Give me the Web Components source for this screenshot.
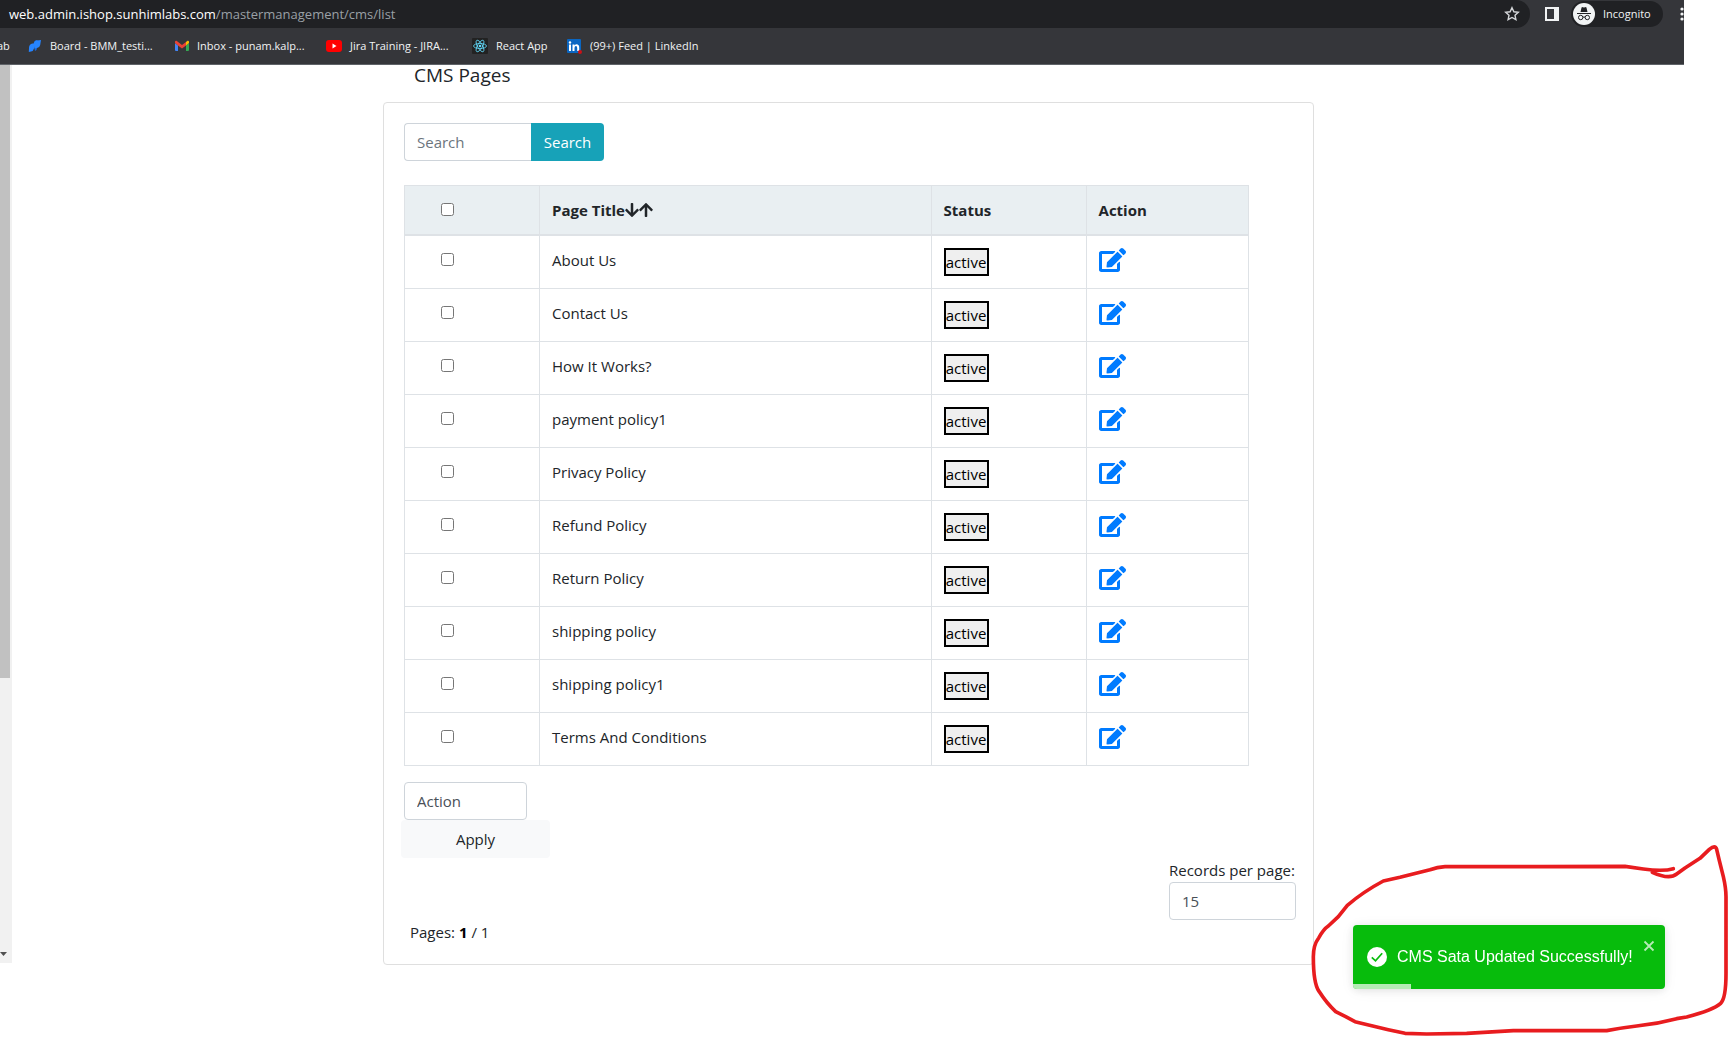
<!DOCTYPE html>
<html lang="en">
<head>
    <meta charset="utf-8">
    <title>CMS Pages</title>
    <style>
        body {
            margin: 0;
            background: #fff;
            color: #212529;
            font: 15px/24px "Open Sans", "Noto Sans", sans-serif;
        }
    </style>
</head>
<body>
<cms-app></cms-app>

<script>
class BookmarkLink extends HTMLElement {
    connectedCallback() {
        this.attachShadow({mode: 'open'}).innerHTML = `
            <style>
              :host {
                display: block;
                flex: none;
                box-sizing: border-box;
              }
              a {
                display: flex;
                align-items: center;
                gap: 8px;
                color: #f1f3f4;
                text-decoration: none;
                white-space: nowrap;
              }
            </style>
            <a href="#"><slot name="icon"></slot><span><slot></slot></span></a>
        `;
    }
}

class BrowserBar extends HTMLElement {
    connectedCallback() {
        this.attachShadow({mode: 'open'}).innerHTML = `
            <style>
              :host {
                display: block;
                overflow: hidden;
                margin-right: 44px;
                background: #35363a;
                border-bottom: 1px solid #5f6368;
                font-size: 11px;
                line-height: 16px;
                color: #f1f3f4;
              }
              .top {
                display: flex;
                align-items: center;
                height: 28px;
              }
              .address {
                display: flex;
                flex: 1;
                align-items: center;
                justify-content: space-between;
                height: 28px;
                padding: 0 10px 0 9px;
                box-sizing: border-box;
                background: #202124;
                border-radius: 0 14px 14px 0;
                font-size: 13px;
                color: #9aa0a6;
              }
              .address b {
                color: #fff;
                font-weight: 400;
              }
              .panel {
                margin: 0 12px 0 15px;
              }
              .incognito {
                display: flex;
                align-items: center;
                gap: 8px;
                width: 92px;
                height: 26px;
                padding: 0 2px;
                box-sizing: border-box;
                background: #202124;
                border-radius: 13px;
              }
              .dots {
                margin: 0 -2px 0 17px;
              }
              .address {
                margin-right: 0;
              }
              .top {
                padding-right: 2px;
              }
              svg {
                display: block;
                flex: none;
              }
              nav {
                display: flex;
                align-items: center;
                height: 36px;
                margin-left: -3px;
              }
              .cut { width: 31px; }
              .board { width: 147px; }
              .mail { width: 151px; }
              .video { width: 146px; }
              .react { width: 95px; }
            </style>
            <div class="top">
                <div class="address">
                    <span><b>web.admin.ishop.sunhimlabs.com</b>/mastermanagement/cms/list</span>
                    <svg width="16" height="16" viewBox="0 0 16 16" fill="none" stroke="#d5d7da" stroke-width="1.4"><path d="M8 1.7l1.9 4.1 4.4.5-3.3 3 .9 4.4L8 11.5l-3.9 2.2.9-4.4-3.3-3 4.4-.5z"/></svg>
                </div>
                <svg class="panel" width="14" height="14" viewBox="0 0 14 14"><path fill="#f1f3f4" fill-rule="evenodd" d="M0 0h14v14H0zM2 2v10h7V2z"/></svg>
                <div class="incognito">
                    <svg width="22" height="22" viewBox="0 0 22 22">
                        <circle cx="11" cy="11" r="11" fill="#f1f3f4"/>
                        <path fill="#202124" d="M7.5 9l1-4.300q.3-.8 1.200-.5l1.300.4 1.300-.4q.9-.3 1.200.5l1 4.300zM4 10h14v1H4z"/>
                        <g fill="none" stroke="#202124"><circle cx="7.700" cy="14.500" r="2.200"/><circle cx="14.300" cy="14.500" r="2.200"/><path d="M9.900 14.300q1.100-.8 2.200 0"/></g>
                    </svg>
                    <span>Incognito</span>
                </div>
                <svg class="dots" width="4" height="14" viewBox="0 0 4 14" fill="#f1f3f4"><circle cx="2" cy="2" r="1.600"/><circle cx="2" cy="7" r="1.600"/><circle cx="2" cy="12" r="1.600"/></svg>
            </div>
            <nav>
                <bookmark-link class="cut">ab</bookmark-link>
                <bookmark-link class="board">
                    <svg slot="icon" width="14" height="14" viewBox="0 0 14 14"><path fill="#1868db" d="M5.500 5L7 12q2-.5 2-3l.5-8Q6 1 5.500 5z"/><path fill="#2684ff" d="M6 4.500Q6 2 9 1.600L13 1l-.8 5Q11.800 8.500 9 9l-2.500.5zM1 9q0-4 3.500-4.500l2-.3L6 9.500Q5.500 12 3 12.500L.8 13z"/></svg>
                    Board - BMM_testi...
                </bookmark-link>
                <bookmark-link class="mail">
                    <svg slot="icon" width="14" height="12" viewBox="0 0 14 12"><path fill="#4285f4" d="M0 3l3 2.500V11H1q-1 0-1-1z"/><path fill="#34a853" d="M14 3l-3 2.500V11h2q1 0 1-1z"/><path fill="#ea4335" d="M0 3V2Q0 .5 1.500.8L7 5l4-3v3.500L7 8.500 3 5.500z"/><path fill="#fbbc04" d="M11 5.500V2l1.500-1.200Q14 .5 14 2v1z"/></svg>
                    Inbox - punam.kalp...
                </bookmark-link>
                <bookmark-link class="video">
                    <svg slot="icon" width="16" height="12" viewBox="0 0 16 12"><rect width="16" height="12" rx="3" fill="#f00"/><path fill="#fff" d="M6.500 3.500L10.500 6l-4 2.500z"/></svg>
                    Jira Training - JIRA...
                </bookmark-link>
                <bookmark-link class="react">
                    <svg slot="icon" width="16" height="16" viewBox="0 0 16 16"><rect width="16" height="16" rx="1" fill="#222"/><g fill="none" stroke="#61dafb" stroke-width=".8"><ellipse cx="8" cy="8" rx="6.500" ry="2.500"/><ellipse cx="8" cy="8" rx="6.500" ry="2.500" transform="rotate(60 8 8)"/><ellipse cx="8" cy="8" rx="6.500" ry="2.500" transform="rotate(120 8 8)"/></g><circle cx="8" cy="8" r="1.300" fill="#61dafb"/></svg>
                    React App
                </bookmark-link>
                <bookmark-link>
                    <svg slot="icon" width="15" height="15" viewBox="0 0 15 15"><rect width="14" height="14" rx="1" fill="#0a66c2"/><path fill="#fff" d="M2 5.500h2V12H2zM5.500 5.500h2v1q2-2.300 4.300 0 .4.600.4 2V12h-2V9q0-2-1.300-2T7.500 9v3h-2z"/><circle cx="3" cy="3.500" r="1.200" fill="#fff"/><circle cx="13" cy="13" r="2" fill="#cc1016"/></svg>
                    (99+) Feed | LinkedIn
                </bookmark-link>
            </nav>
        `;
    }
}

class SideScroll extends HTMLElement {
    connectedCallback() {
        this.attachShadow({mode: 'open'}).innerHTML = `
            <style>
              :host {
                display: flex;
                flex-direction: column;
                justify-content: space-between;
                background: #f1f1f1;
              }
              .thumb {
                width: 10px;
                height: 68.3%;
                background: #c1c1c1;
              }
              svg {
                display: block;
                margin-bottom: 7px;
              }
            </style>
            <div class="thumb"></div>
            <svg width="7" height="4" viewBox="0 0 7 4"><path fill="#505050" d="M0 0h7L3.500 4z"/></svg>
        `;
    }
}

class SearchBox extends HTMLElement {
    connectedCallback() {
        this.attachShadow({mode: 'open'}).innerHTML = `
            <style>
              :host {
                display: flex;
              }
              input, button {
                height: 38px;
                box-sizing: border-box;
                padding: 0 12px;
                font: inherit;
              }
              input {
                width: 127px;
                border: 1px solid #ced4da;
                border-right: 0;
                border-radius: 4px 0 0 4px;
              }
              input::placeholder {
                color: #6c757d;
              }
              button {
                width: 73px;
                padding: 0;
                border: 0;
                border-radius: 0 4px 4px 0;
                background: #17a2b8;
                color: #fff;
              }
            </style>
            <input type="text" placeholder="Search" aria-label="Search pages">
            <button type="button">Search</button>
        `;
    }
}

class PagesTable extends HTMLElement {
    connectedCallback() {
        this.pages = ['About Us', 'Contact Us', 'How It Works?', 'payment policy1', 'Privacy Policy',
            'Refund Policy', 'Return Policy', 'shipping policy', 'shipping policy1', 'Terms And Conditions'];
        this.attachShadow({mode: 'open'});
        this.render();
    }

    renderRow(title) {
        return `
            <tr>
                <td class="check"><input type="checkbox" aria-label="Select ${title}"></td>
                <td>${title}</td>
                <td><button type="button">active</button></td>
                <td><a href="#" aria-label="Edit ${title}"><svg width="27" height="24" viewBox="0 0 576 512" fill="#007bff"><path d="M402.600 83.200l90.200 90.200c3.800 3.800 3.800 10 0 13.800L274.400 405.600l-92.800 10.300c-12.400 1.400-22.900-9.100-21.500-21.500l10.300-92.800L388.800 83.200c3.800-3.800 10-3.800 13.800 0zm162-22.900l-48.800-48.800c-15.200-15.200-39.900-15.200-55.200 0l-35.400 35.400c-3.800 3.800-3.800 10 0 13.800l90.200 90.200c3.800 3.800 10 3.800 13.800 0l35.400-35.400c15.200-15.300 15.200-40 0-55.200zM384 346.200V448H64V128h229.800c3.200 0 6.200-1.300 8.500-3.500l40-40c7.600-7.600 2.200-20.500-8.500-20.500H48C21.500 64 0 85.500 0 112v352c0 26.500 21.500 48 48 48h352c26.500 0 48-21.500 48-48V306.200c0-10.700-12.900-16-20.500-8.500l-40 40c-2.200 2.300-3.500 5.300-3.500 8.500z"/></svg></a></td>
            </tr>
        `;
    }

    render() {
        const arrow = 'M413.100 222.500l22.200 22.200c9.400 9.400 9.400 24.600 0 33.900L241 473c-9.400 9.400-24.600 9.400-33.900 0L12.700 278.600c-9.400-9.400-9.400-24.600 0-33.900l22.200-22.200c9.500-9.500 25-9.300 34.300.4L184 343.400V56c0-13.300 10.700-24 24-24h32c13.300 0 24 10.700 24 24v287.400l114.800-120.500c9.300-9.800 24.800-10 34.300-.4z';
        this.shadowRoot.innerHTML = `
            <style>
              :host {
                display: block;
              }
              table {
                width: 95%;
                table-layout: fixed;
                border-collapse: collapse;
              }
              th, td {
                box-sizing: border-box;
                padding: 12px;
                border: 1px solid #dee2e6;
                text-align: left;
                vertical-align: top;
              }
              th {
                height: 49px;
                padding-bottom: 11px;
                border-bottom-width: 2px;
                background: #e9eff2;
                font-weight: 700;
              }
              td {
                height: 53px;
              }
              .check {
                width: 135px;
                padding: 17px 36px 16px;
                line-height: 0;
              }
              .status { width: 155px; }
              .action { width: 162px; }
              input {
                width: 13px;
                height: 13px;
                margin: 0;
              }
              button {
                display: block;
                width: 45px;
                height: 28px;
                padding: 0;
                border: 2px solid #000;
                background: #efefef;
                color: #000;
                font: inherit;
              }
              a, a svg {
                display: block;
              }
              .arrow {
                display: inline-block;
                vertical-align: -2px;
              }
            </style>
            <table>
                <thead>
                    <tr>
                        <th class="check"><input type="checkbox" aria-label="Select all"></th>
                        <th>Page Title<svg class="arrow" width="14" height="16" viewBox="0 0 448 512" fill="#212529"><path d="${arrow}"/></svg><svg class="arrow" width="14" height="16" viewBox="0 0 448 512" fill="#212529"><path transform="rotate(180 224 256)" d="${arrow}"/></svg></th>
                        <th class="status">Status</th>
                        <th class="action">Action</th>
                    </tr>
                </thead>
                <tbody>${this.pages.map((title) => this.renderRow(title)).join('')}</tbody>
            </table>
        `;
    }
}

class TableFooter extends HTMLElement {
    connectedCallback() {
        this.attachShadow({mode: 'open'}).innerHTML = `
            <style>
              :host {
                display: block;
              }
              select {
                display: block;
                width: 127px;
                height: 38px;
                padding: 0 12px;
                box-sizing: border-box;
                appearance: none;
                border: 1px solid #ced4da;
                border-radius: 4px;
                background: #fff;
                color: #495057;
                font: inherit;
              }
              .bulk {
                width: 123px;
              }
              button {
                display: block;
                width: 149px;
                height: 38px;
                margin-left: -3px;
                padding: 0;
                border: 0;
                border-radius: 4px;
                background: #f8f9fa;
                color: #212529;
                font: inherit;
              }
              .records {
                width: 127px;
                margin: 0 -3px 0 auto;
                white-space: nowrap;
              }
              .pages {
                padding-left: 6px;
              }
              .pages b {
                color: #000;
              }
            </style>
            <select class="bulk" aria-label="Bulk action"><option>Action</option></select>
            <button type="button">Apply</button>
            <div class="records">
                <label for="records">Records per page:</label>
                <select id="records"><option>15</option></select>
            </div>
            <div class="pages">Pages: <b>1</b> / 1</div>
        `;
    }
}

class CmsCard extends HTMLElement {
    connectedCallback() {
        this.attachShadow({mode: 'open'}).innerHTML = `
            <style>
              :host {
                display: block;
              }
              h1 {
                margin: 0 0 17px 31px;
                font-size: 19px;
                font-weight: 400;
                line-height: 20px;
              }
              section {
                display: flex;
                flex-direction: column;
                padding: 20px;
                border: 1px solid #dfdfdf;
                border-radius: 4px;
              }
              pages-table {
                margin: 24px 0 16px;
              }
            </style>
            <h1><slot></slot></h1>
            <section>
                <search-box></search-box>
                <pages-table></pages-table>
                <table-footer></table-footer>
            </section>
        `;
    }
}

class ToastMessage extends HTMLElement {
    connectedCallback() {
        this.attachShadow({mode: 'open'}).innerHTML = `
            <style>
              :host {
                display: block;
                overflow: hidden;
                border-radius: 4px;
                background: #07bc0c;
                box-shadow: 0 1px 10px rgba(0, 0, 0, .1), 0 2px 15px rgba(0, 0, 0, .05);
                color: #fff;
                font: 16px/20px "Liberation Sans", sans-serif;
              }
              .body {
                display: flex;
                height: 59px;
                padding: 0 10px 0 14px;
              }
              .icon {
                flex: none;
                margin: 22px 10px 0 0;
              }
              p {
                flex: 1;
                margin: 22px 0 0;
                white-space: nowrap;
              }
              button {
                display: block;
                height: 12px;
                margin-top: 15px;
                padding: 0;
                border: 0;
                background: none;
              }
              button svg {
                display: block;
              }
              .progress {
                width: 58px;
                height: 5px;
                background: rgba(255, 255, 255, .7);
              }
            </style>
            <div class="body">
                <svg class="icon" width="20" height="20" viewBox="0 0 20 20"><circle cx="10" cy="10" r="10" fill="#fff"/><path fill="none" stroke="#07bc0c" stroke-width="1.700" d="M4.800 10.300l3.700 3.500 6.700-7.600"/></svg>
                <p><slot></slot></p>
                <button type="button" aria-label="Close"><svg width="12" height="12" viewBox="0 0 12 12" fill="none" stroke="#b5ebb6" stroke-width="1.800"><path d="M1.500 1.500l9 9M10.500 1.500l-9 9"/></svg></button>
            </div>
            <div class="progress"></div>
        `;
    }
}

class RedMarker extends HTMLElement {
    connectedCallback() {
        this.attachShadow({mode: 'open'}).innerHTML = `
            <style>
              :host, svg {
                display: block;
              }
            </style>
            <svg width="428" height="207" viewBox="0 0 1284 621" fill="none" stroke="#e81c1f" stroke-width="11" stroke-linecap="round" stroke-linejoin="round">
                <path d="M1057 127Q1108 150 1130 132L1155 114L1200 85L1228 58Q1246 43 1250 58L1258 92L1270 140Q1278 175 1278 200V430Q1278 505 1262 520Q1240 540 1160 561L1130 566Q1070 582 1010 588Q960 594 920 602H640L500 610L380 612L315 610L265 599L165 575L137 560L107 545Q80 520 57 484Q40 460 40 380Q40 345 56 324Q70 298 85 288L115 260L142 226Q190 185 250 153L300 142L390 119Q412 111 435 110H720L975 109L1030 117Q1090 125 1120 116"/>
            </svg>
        `;
    }
}

class CmsApp extends HTMLElement {
    connectedCallback() {
        this.attachShadow({mode: 'open'}).innerHTML = `
            <style>
              :host {
                display: block;
                position: relative;
                min-height: 100vh;
              }
              .page {
                display: grid;
                grid-template-columns: 12px 371fr 931fr 414fr;
              }
              side-scroll {
                margin-bottom: 2px;
              }
              cms-card {
                grid-column: 3;
              }
              toast-message {
                position: fixed;
                right: 63px;
                bottom: 48px;
                width: 312px;
              }
              red-marker {
                position: fixed;
                right: 0;
                bottom: 0;
                pointer-events: none;
              }
            </style>
            <browser-bar></browser-bar>
            <div class="page">
                <side-scroll></side-scroll>
                <cms-card>CMS Pages</cms-card>
            </div>
            <toast-message>CMS Sata Updated Successfully!</toast-message>
            <red-marker></red-marker>
        `;
    }
}

customElements.define('bookmark-link', BookmarkLink);
customElements.define('browser-bar', BrowserBar);
customElements.define('side-scroll', SideScroll);
customElements.define('search-box', SearchBox);
customElements.define('pages-table', PagesTable);
customElements.define('table-footer', TableFooter);
customElements.define('cms-card', CmsCard);
customElements.define('toast-message', ToastMessage);
customElements.define('red-marker', RedMarker);
customElements.define('cms-app', CmsApp);
</script>
</body>
</html>
